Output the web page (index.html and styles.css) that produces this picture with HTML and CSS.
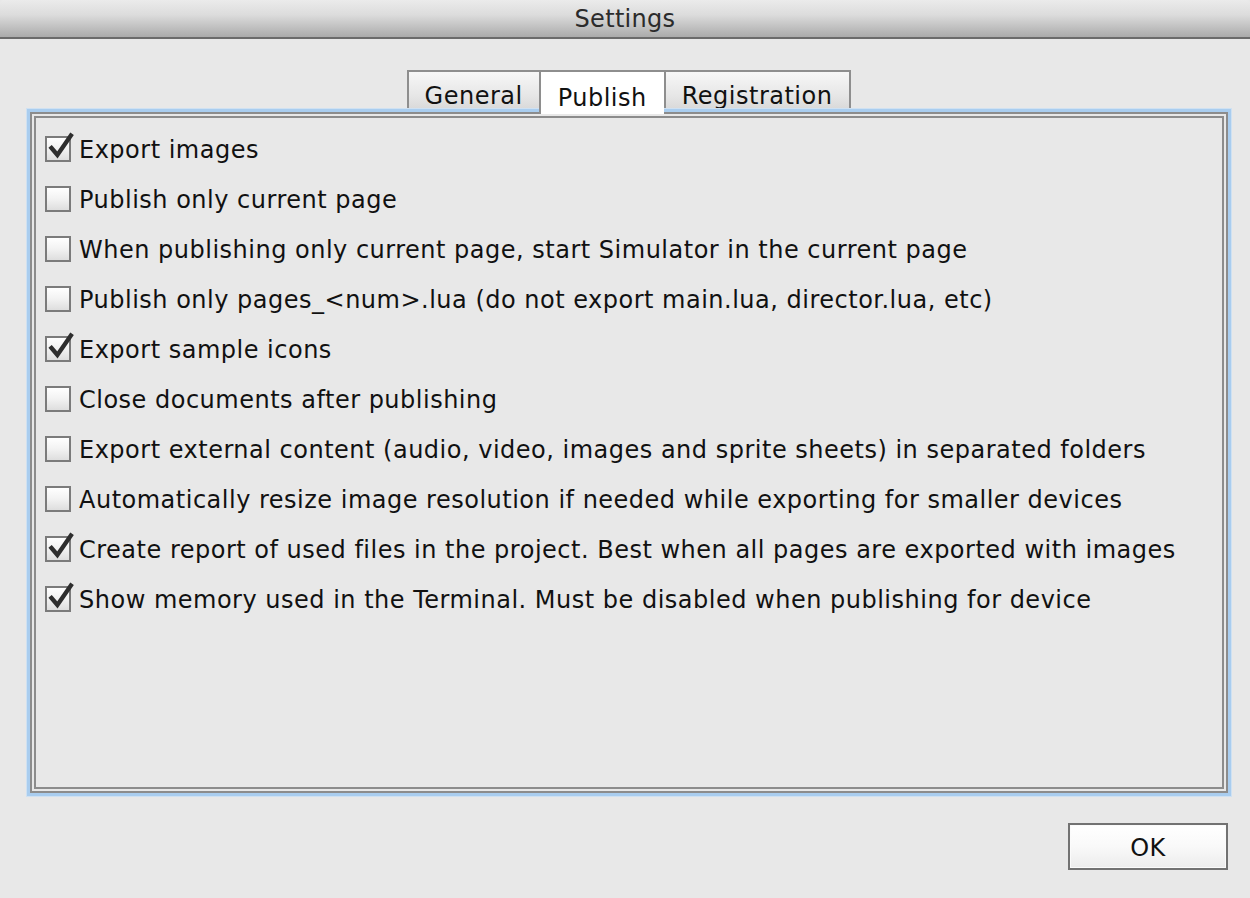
FILE: index.html
```html
<!DOCTYPE html>
<html>
<head>
<meta charset="utf-8">
<title>Settings</title>
<link rel="stylesheet" href="styles.css">
</head>
<body>
<div class="window">
  <div class="titlebar">Settings</div>
  <div class="content">
    <div class="tabs">
      <div class="tab">General</div>
      <div class="tab active">Publish</div>
      <div class="tab last">Registration</div>
    </div>
    <div class="panel">
      <div class="frame">
        <div class="inner">
          <label class="row"><span class="cb checked"><svg viewBox="0 0 26 26"><path d="M6 13 L11.5 19.5 L24 1.5" /></svg></span><span class="lbl">Export images</span></label>
          <label class="row"><span class="cb"></span><span class="lbl">Publish only current page</span></label>
          <label class="row"><span class="cb"></span><span class="lbl">When publishing only current page, start Simulator in the current page</span></label>
          <label class="row"><span class="cb"></span><span class="lbl">Publish only pages_&lt;num&gt;.lua (do not export main.lua, director.lua, etc)</span></label>
          <label class="row"><span class="cb checked"><svg viewBox="0 0 26 26"><path d="M6 13 L11.5 19.5 L24 1.5" /></svg></span><span class="lbl">Export sample icons</span></label>
          <label class="row"><span class="cb"></span><span class="lbl">Close documents after publishing</span></label>
          <label class="row"><span class="cb"></span><span class="lbl">Export external content (audio, video, images and sprite sheets) in separated folders</span></label>
          <label class="row"><span class="cb"></span><span class="lbl">Automatically resize image resolution if needed while exporting for smaller devices</span></label>
          <label class="row"><span class="cb checked"><svg viewBox="0 0 26 26"><path d="M6 13 L11.5 19.5 L24 1.5" /></svg></span><span class="lbl">Create report of used files in the project. Best when all pages are exported with images</span></label>
          <label class="row"><span class="cb checked"><svg viewBox="0 0 26 26"><path d="M6 13 L11.5 19.5 L24 1.5" /></svg></span><span class="lbl">Show memory used in the Terminal. Must be disabled when publishing for device</span></label>
        </div>
      </div>
    </div>
    <div class="footer">
      <button class="ok">OK</button>
    </div>
  </div>
</div>
</body>
</html>
```
FILE: styles.css
```css
html, body {
  margin: 0;
  padding: 0;
  background: #e8e8e8;
}
body {
  font-family: "DejaVu Sans", "Verdana", sans-serif;
  font-size: 24px;
  color: #111;
  letter-spacing: 0.5px;
}
.window {
  width: 1250px;
  height: 898px;
  display: flex;
  flex-direction: column;
  background: #e8e8e8;
}
.titlebar {
  height: 37px;
  border-bottom: 2px solid #6b6b6b;
  background: linear-gradient(#ebebeb, #dcdcdc 40%, #ababab);
  display: flex;
  align-items: center;
  justify-content: center;
  color: #2b2b2b;
  line-height: 1;
  border-radius: 4px 4px 0 0;
  letter-spacing: 0.3px;
}
.content {
  display: flex;
  flex-direction: column;
  padding: 31px 19px 0 27px;
}
.tabs {
  display: flex;
  justify-content: center;
  align-items: flex-start;
  margin-bottom: -3px;
}
.tab {
  position: relative;
  z-index: 0;
  box-sizing: border-box;
  height: 42px;
  padding: 7px 16px 0 16px;
  border-top: 2px solid #8e8e8e;
  border-left: 2px solid #8e8e8e;
  background: linear-gradient(#f7f7f7, #e6e6e6 60%, #d6d6d6);
  display: flex;
  align-items: center;
  color: #111;
}
.tab.last {
  border-right: 2px solid #8e8e8e;
  padding-right: 17px;
}
.tab.active {
  z-index: 2;
  background: #ffffff;
  height: 44px;
  margin-bottom: -2px;
  padding: 9px 17px 0 17px;
}
.panel {
  position: relative;
  z-index: 1;
  height: 687px;
  box-sizing: border-box;
  border: 3px solid #a9cdef;
  box-shadow: 0 0 0 1px #cfe1f2;
  background: #e8e8e8;
  display: flex;
}
.frame {
  flex: 1;
  border: 2px solid #8c8c8c;
  padding: 2px;
  display: flex;
}
.inner {
  flex: 1;
  border: 2px solid #8c8c8c;
  padding: 6px 0 0 9px;
  display: flex;
  flex-direction: column;
}
.row {
  height: 50px;
  display: flex;
  align-items: center;
  gap: 8px;
}
.cb {
  position: relative;
  width: 26px;
  height: 26px;
  box-sizing: border-box;
  border: 2px solid #7b7b7b;
  background: linear-gradient(#ffffff, #f2f2f2 50%, #dedede);
  flex: none;
}
.cb svg {
  position: absolute;
  left: -2px;
  top: -4px;
  width: 28px;
  height: 28px;
  overflow: visible;
}
.cb svg path {
  fill: none;
  stroke: #2e2e2e;
  stroke-width: 4;
  stroke-linecap: square;
  stroke-linejoin: miter;
}
.lbl {
  white-space: nowrap;
  line-height: 1;
  padding-top: 2px;
}
.footer {
  display: flex;
  justify-content: flex-end;
  padding: 27px 3px 0 0;
}
.ok {
  width: 160px;
  height: 47px;
  box-sizing: border-box;
  border: 2px solid #727272;
  background: linear-gradient(#ffffff, #f9f9f9 50%, #ececec);
  box-shadow: inset 0 0 0 1px #fbfbfb;
  font-family: "DejaVu Sans", "Verdana", sans-serif;
  font-size: 24px;
  letter-spacing: 0.5px;
  color: #111;
  padding: 2px 0 0;
  margin: 0;
}
```
